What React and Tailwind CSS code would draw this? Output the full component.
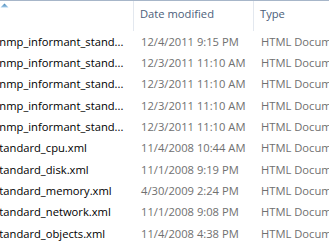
import React from 'react';

const files = [
  { name: 'snmp_informant_stand...', date: '12/4/2011 9:15 PM' },
  { name: 'snmp_informant_stand...', date: '12/3/2011 11:10 AM' },
  { name: 'snmp_informant_stand...', date: '12/3/2011 11:10 AM' },
  { name: 'snmp_informant_stand...', date: '12/3/2011 11:10 AM' },
  { name: 'snmp_informant_stand...', date: '12/3/2011 11:10 AM' },
  { name: 'standard_cpu.xml', date: '11/4/2008 10:44 AM' },
  { name: 'standard_disk.xml', date: '11/1/2008 9:19 PM' },
  { name: 'standard_memory.xml', date: '4/30/2009 2:24 PM' },
  { name: 'standard_network.xml', date: '11/1/2008 9:08 PM' },
  { name: 'standard_objects.xml', date: '11/4/2008 4:38 PM' },
];

const SortArrow = () => (
  <svg width="9" height="5" viewBox="0 0 9 5" className="absolute left-[0px] top-[2px]">
    <defs>
      <linearGradient id="sa" x1="0" y1="0" x2="0" y2="1">
        <stop offset="0" stopColor="#3c7fb1" />
        <stop offset="1" stopColor="#a9d0ee" />
      </linearGradient>
    </defs>
    <path d="M0.5 4.5 L4.5 0.5 L8.5 4.5 Z" fill="url(#sa)" />
  </svg>
);

export default function App() {
  return (
    <div
      className="w-[329px] h-[247px] overflow-hidden bg-white text-[11.2px]"
      style={{ fontFamily: '"Open Sans", "Noto Sans", sans-serif' }}
    >
      {/* Header */}
      <div className="relative flex h-[31px] border-t border-[#a7b6c9] text-[#4c607a] leading-none">
        <SortArrow />
        <div className="w-[134px] shrink-0 border-r border-[#e3e8ef]" />
        <div className="w-[120px] shrink-0 border-r border-[#e3e8ef] pl-[6px] pt-[7px] whitespace-nowrap">Date modified</div>
        <div className="flex-1 pl-[6px] pt-[7px] whitespace-nowrap">Type</div>
      </div>

      {/* Rows */}
      {files.map((f, i) => (
        <div key={i} className="flex h-[21.33px] items-center whitespace-nowrap leading-[16px]">
          <div className="w-[134px] shrink-0 overflow-hidden">
            <span className="ml-[-6px] text-black">{f.name}</span>
          </div>
          <div className="w-[120px] shrink-0 pl-[7px] text-[#707070]">{f.date}</div>
          <div className="flex-1 pl-[7px] text-[#707070]">HTML Document</div>
        </div>
      ))}
    </div>
  );
}
